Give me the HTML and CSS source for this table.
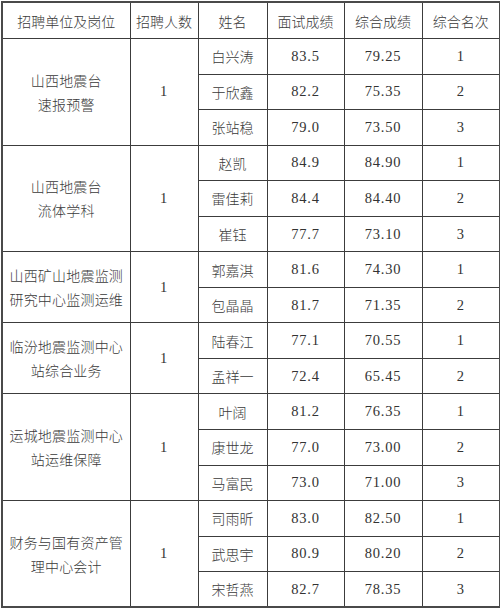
FILE: index.html
```html
<!DOCTYPE html>
<html lang="zh">
<head>
<meta charset="utf-8">
<link rel="stylesheet" href="styles.css">
</head>
<body>
<table class="score-table">
  <colgroup>
    <col class="c-unit"><col class="c-num"><col class="c-name"><col class="c-score"><col class="c-total"><col class="c-rank">
  </colgroup>
  <thead>
    <tr class="head"><th>招聘单位及岗位</th><th>招聘人数</th><th>姓名</th><th>面试成绩</th><th>综合成绩</th><th>综合名次</th></tr>
  </thead>
  <tbody>
    <tr><td class="unit" rowspan="3">山西地震台<br>速报预警</td><td class="n" rowspan="3">1</td><td>白兴涛</td><td class="n">83.5</td><td class="n">79.25</td><td class="n">1</td></tr>
    <tr><td>于欣鑫</td><td class="n">82.2</td><td class="n">75.35</td><td class="n">2</td></tr>
    <tr><td>张站稳</td><td class="n">79.0</td><td class="n">73.50</td><td class="n">3</td></tr>

    <tr><td class="unit" rowspan="3">山西地震台<br>流体学科</td><td class="n" rowspan="3">1</td><td>赵凯</td><td class="n">84.9</td><td class="n">84.90</td><td class="n">1</td></tr>
    <tr><td>雷佳莉</td><td class="n">84.4</td><td class="n">84.40</td><td class="n">2</td></tr>
    <tr><td>崔钰</td><td class="n">77.7</td><td class="n">73.10</td><td class="n">3</td></tr>

    <tr><td class="unit" rowspan="2">山西矿山地震监测<br>研究中心监测运维</td><td class="n" rowspan="2">1</td><td>郭嘉淇</td><td class="n">81.6</td><td class="n">74.30</td><td class="n">1</td></tr>
    <tr><td>包晶晶</td><td class="n">81.7</td><td class="n">71.35</td><td class="n">2</td></tr>

    <tr><td class="unit" rowspan="2">临汾地震监测中心<br>站综合业务</td><td class="n" rowspan="2">1</td><td>陆春江</td><td class="n">77.1</td><td class="n">70.55</td><td class="n">1</td></tr>
    <tr><td>孟祥一</td><td class="n">72.4</td><td class="n">65.45</td><td class="n">2</td></tr>

    <tr><td class="unit" rowspan="3">运城地震监测中心<br>站运维保障</td><td class="n" rowspan="3">1</td><td>叶阔</td><td class="n">81.2</td><td class="n">76.35</td><td class="n">1</td></tr>
    <tr><td>康世龙</td><td class="n">77.0</td><td class="n">73.00</td><td class="n">2</td></tr>
    <tr><td>马富民</td><td class="n">73.0</td><td class="n">71.00</td><td class="n">3</td></tr>

    <tr><td class="unit" rowspan="3">财务与国有资产管<br>理中心会计</td><td class="n" rowspan="3">1</td><td>司雨昕</td><td class="n">83.0</td><td class="n">82.50</td><td class="n">1</td></tr>
    <tr><td>武思宇</td><td class="n">80.9</td><td class="n">80.20</td><td class="n">2</td></tr>
    <tr><td>宋哲燕</td><td class="n">82.7</td><td class="n">78.35</td><td class="n">3</td></tr>
  </tbody>
</table>
</body>
</html>
```
FILE: styles.css
```css
html, body {
  margin: 0;
  padding: 0;
  background: #fff;
}
body {
  padding: 1px 0 0 1px;
}
.score-table {
  border-collapse: collapse;
  table-layout: fixed;
  width: 498px;
  font-family: "Noto Sans CJK SC", sans-serif;
  font-weight: 300;
  font-size: 14px;
  color: #3a3a3a;
  border: 2px solid #4a4a4a;
}
.c-unit { width: 128px; }
.c-num { width: 68px; }
.c-name { width: 69px; }
.c-score { width: 77px; }
.c-total { width: 78px; }
.c-rank { width: 78px; }
.score-table th,
.score-table td {
  border: 1px solid #3c3c3c;
  padding: 0;
  text-align: center;
  vertical-align: middle;
  font-weight: 300;
  white-space: nowrap;
}
.head th {
  height: 35px;
}
.score-table tbody tr {
  height: 35.56px;
}
.unit {
  line-height: 24px;
  letter-spacing: 0.2px;
}
.score-table .n {
  font-family: "Liberation Serif", serif;
  font-weight: normal;
  font-size: 14.5px;
  letter-spacing: 0.8px;
  color: #333;
}
```
